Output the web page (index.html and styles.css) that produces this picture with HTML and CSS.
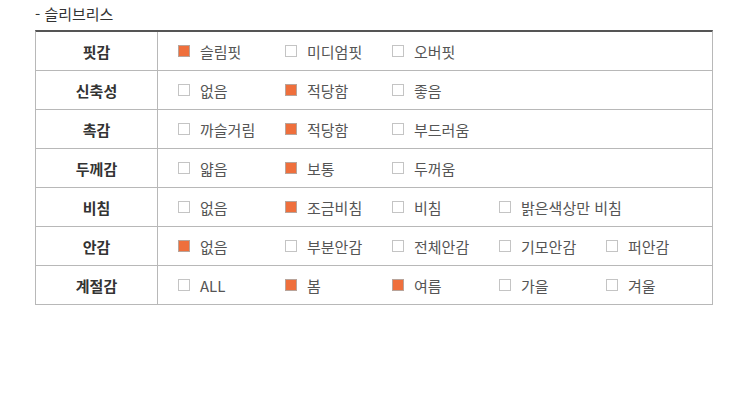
FILE: index.html
```html
<!DOCTYPE html>
<html lang="ko">
<head>
<meta charset="utf-8">
<link rel="stylesheet" href="styles.css">
</head>
<body>
<div class="spec">
  <div class="title">- 슬리브리스</div>
  <div class="table">
    <div class="row">
      <div class="label">핏감</div>
      <div class="opts">
        <div class="opt"><span class="box on"></span>슬림핏</div>
        <div class="opt"><span class="box"></span>미디엄핏</div>
        <div class="opt"><span class="box"></span>오버핏</div>
      </div>
    </div>
    <div class="row">
      <div class="label">신축성</div>
      <div class="opts">
        <div class="opt"><span class="box"></span>없음</div>
        <div class="opt"><span class="box on"></span>적당함</div>
        <div class="opt"><span class="box"></span>좋음</div>
      </div>
    </div>
    <div class="row">
      <div class="label">촉감</div>
      <div class="opts">
        <div class="opt"><span class="box"></span>까슬거림</div>
        <div class="opt"><span class="box on"></span>적당함</div>
        <div class="opt"><span class="box"></span>부드러움</div>
      </div>
    </div>
    <div class="row">
      <div class="label">두께감</div>
      <div class="opts">
        <div class="opt"><span class="box"></span>얇음</div>
        <div class="opt"><span class="box on"></span>보통</div>
        <div class="opt"><span class="box"></span>두꺼움</div>
      </div>
    </div>
    <div class="row">
      <div class="label">비침</div>
      <div class="opts">
        <div class="opt"><span class="box"></span>없음</div>
        <div class="opt"><span class="box on"></span>조금비침</div>
        <div class="opt"><span class="box"></span>비침</div>
        <div class="opt wide"><span class="box"></span>밝은색상만 비침</div>
      </div>
    </div>
    <div class="row">
      <div class="label">안감</div>
      <div class="opts">
        <div class="opt"><span class="box on"></span>없음</div>
        <div class="opt"><span class="box"></span>부분안감</div>
        <div class="opt"><span class="box"></span>전체안감</div>
        <div class="opt"><span class="box"></span>기모안감</div>
        <div class="opt"><span class="box"></span>퍼안감</div>
      </div>
    </div>
    <div class="row">
      <div class="label">계절감</div>
      <div class="opts">
        <div class="opt"><span class="box"></span>ALL</div>
        <div class="opt"><span class="box on"></span>봄</div>
        <div class="opt"><span class="box on"></span>여름</div>
        <div class="opt"><span class="box"></span>가을</div>
        <div class="opt"><span class="box"></span>겨울</div>
      </div>
    </div>
  </div>
</div>
</body>
</html>
```

FILE: styles.css
```css
* { box-sizing: border-box; }
html, body { margin: 0; padding: 0; background: #fff; }
body {
  font-family: "Noto Sans CJK KR", "Noto Sans", sans-serif;
  color: #333;
}
.spec { padding-left: 35px; }
.title {
  height: 30px;
  line-height: 27px;
  font-size: 15px;
  color: #333;
}
.table {
  width: 678px;
  border-top: 2px solid #555;
  border-left: 1px solid #b8b8b8;
  border-right: 1px solid #b8b8b8;
}
.row {
  display: flex;
  height: 39px;
  border-bottom: 1px solid #b8b8b8;
}
.label {
  width: 122px;
  flex: none;
  border-right: 1px solid #b8b8b8;
  display: flex;
  align-items: center;
  justify-content: center;
  font-size: 15px;
  font-weight: bold;
  color: #333;
}
.opts {
  display: flex;
  align-items: center;
  padding-left: 20px;
}
.opt {
  width: 107px;
  flex: none;
  display: flex;
  align-items: center;
  gap: 10px;
  font-size: 15px;
  color: #555;
}
.opt.wide { width: auto; }
.box {
  width: 12px;
  height: 12px;
  flex: none;
  border: 1px solid #c4c4c4;
  background: #fff;
}
.box.on {
  background: #ef6f3c;
  border-color: #b9a49a;
}
```
